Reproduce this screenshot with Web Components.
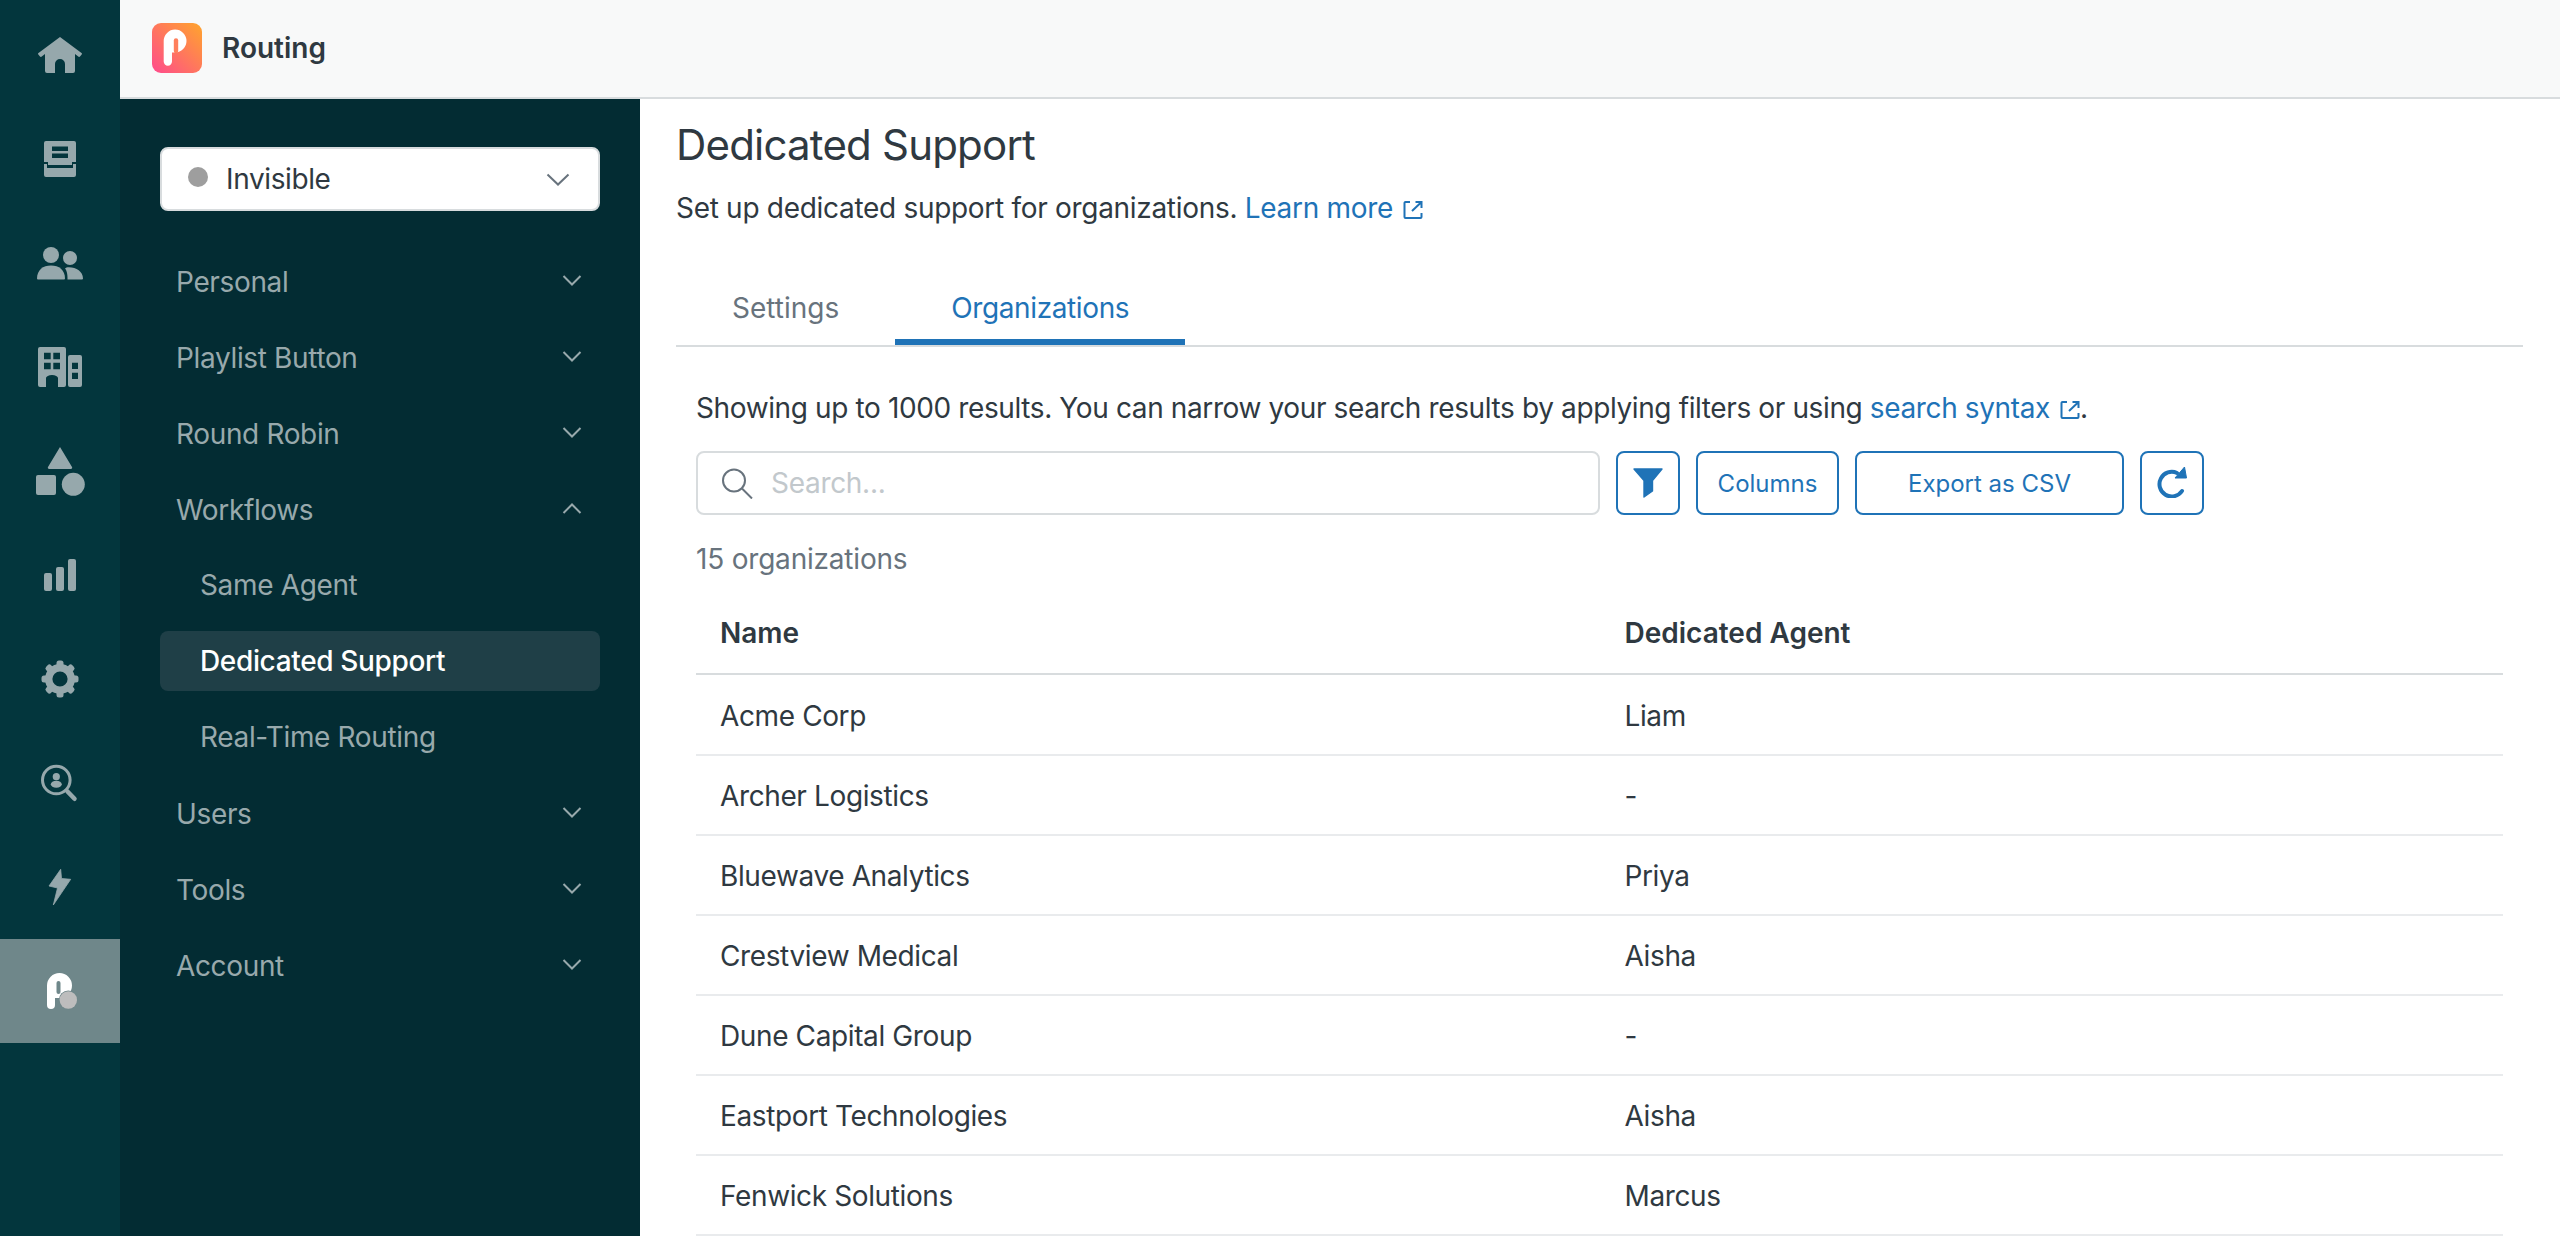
<!DOCTYPE html>
<html lang="en">
<head>
<meta charset="utf-8">
<title>Routing</title>
<style>
  html, body { margin: 0; height: 100%; overflow: hidden; background: #fff; }
  body { font-family: Inter, "Liberation Sans", sans-serif; color: #2f3941; }
</style>
</head>
<body>

<template id="app-shell">
  <style>
    :host { display: grid; grid-template-columns: 120px 1fr; grid-template-rows: 99px 1fr; height: 100vh; overflow: hidden; }
    ::slotted(rail-nav) { grid-row: 1 / 3; }
    .body { display: grid; grid-template-columns: 520px 1fr; min-height: 0; overflow: hidden; }
  </style>
  <slot name="rail"></slot>
  <slot name="bar"></slot>
  <div class="body">
    <slot name="side"></slot>
    <slot name="main"></slot>
  </div>
</template>

<template id="rail-nav">
  <style>
    :host { display: block; background: #03363d; padding-top: 3px; color: #96a8ac; }
  </style>
  <slot></slot>
</template>

<template id="rail-item">
  <style>
    :host { display: flex; align-items: center; justify-content: center; height: 104px; }
    :host([active]) { background: #6f878a; }
    ::slotted(svg) { display: block; }
  </style>
  <slot></slot>
</template>

<template id="top-bar">
  <style>
    :host { display: flex; align-items: center; gap: 20px; padding-left: 32px; padding-bottom: 2px; background: #f8f9f9; border-bottom: 2px solid #d8dcde; box-sizing: border-box; height: 99px; }
    .title { font-size: 28px; font-weight: 600; color: #2f3941; line-height: 40px; }
    svg { display: block; }
  </style>
  <svg width="50" height="50" viewBox="0 0 50 50">
    <defs>
      <linearGradient id="logo" x1="1" y1="0" x2="0" y2="1">
        <stop offset="0" stop-color="#ffa52c"/>
        <stop offset="1" stop-color="#ff4a8d"/>
      </linearGradient>
    </defs>
    <rect width="50" height="50" rx="9" fill="url(#logo)"/>
    <path d="M11.7 18a11.4 11.4 0 1 1 11.4 11.4H20V38.6a4.15 4.15 0 0 1-8.3 0Z" fill="#fff"/>
    <path d="M24 17.5V28" stroke="#ff7f5c" stroke-width="4.4" stroke-linecap="round"/>
  </svg>
  <span class="title"><slot></slot></span>
</template>

<template id="side-nav">
  <style>
    :host { display: block; background: #032c33; padding: 48px 40px 0; box-sizing: border-box; }
    .items { display: flex; flex-direction: column; gap: 16px; margin-top: 41px; }
  </style>
  <slot name="top"></slot>
  <div class="items"><slot></slot></div>
</template>

<template id="status-select">
  <style>
    :host { display: flex; align-items: center; height: 64px; box-sizing: border-box; background: #fff; border: 2px solid #d8dcde; border-radius: 8px; padding: 0 28px 0 26px; font-size: 28px; letter-spacing: -.38px; color: #2f3941; }
    .dot { width: 20px; height: 20px; border-radius: 50%; background: #9e9e9e; margin-right: 18px; margin-top: -4px; }
    .label { flex: 1; }
    svg { display: block; }
  </style>
  <span class="dot"></span>
  <span class="label"><slot></slot></span>
  <svg width="24" height="13" viewBox="0 0 24 13" fill="none" stroke="#68737d" stroke-width="2"><path d="M1.5 1.5 12 11.5 22.5 1.5"/></svg>
</template>

<template id="nav-row">
  <style>
    :host { display: flex; align-items: center; justify-content: space-between; height: 60px; padding: 0 18px 0 16px; border-radius: 8px; font-size: 28px; letter-spacing: -.35px; color: #98a9ac; }
    :host([sub]) { padding-left: 40px; }
    :host([active]) { background: #1f3f47; color: #fff; font-weight: 500; }
    :host([sub]) svg { display: none; }
    :host([open]) svg { transform: scaleY(-1); }
    svg { display: block; margin-top: -4px; }
  </style>
  <span><slot></slot></span>
  <svg width="20" height="11" viewBox="0 0 20 11" fill="none" stroke="#98a9ac" stroke-width="2"><path d="M1.5 1 10 9.5 18.5 1"/></svg>
</template>

<template id="main-view">
  <style>
    :host { display: block; background: #fff; padding: 20px 37px 0 36px; overflow: hidden; min-width: 0; }
    h1 { margin: 0; font-size: 42px; line-height: 52px; font-weight: 400; letter-spacing: -.8px; color: #2f3941; }
    .sub { margin-top: 17px; font-size: 28px; line-height: 40px; letter-spacing: -.3px; }
    .panel { padding: 0 20px; }
  </style>
  <h1><slot name="title"></slot></h1>
  <div class="sub"><slot name="sub"></slot></div>
  <slot name="tabs"></slot>
  <div class="panel"><slot></slot></div>
</template>

<template id="ext-link">
  <style>
    :host { display: inline; color: #1f73b7; }
    svg { display: inline-block; vertical-align: -2px; margin-left: 10px; }
  </style>
  <slot></slot><svg width="20" height="20" viewBox="0 0 20 20" fill="none" stroke="#1f73b7" stroke-width="2"><path d="M7 2H2.5a1 1 0 0 0-1 1V17a1 1 0 0 0 1 1H17.500a1 1 0 0 0 1-1V13"/><path d="M9 11 18 2.500M12.500 2H18.500V8"/></svg></template>

<template id="tab-bar">
  <style>
    :host { display: flex; margin-top: 36px; border-bottom: 2px solid #d8dcde; }
  </style>
  <slot></slot>
</template>

<template id="tab-item">
  <style>
    :host { display: block; padding: 24px 56px 11px; font-size: 28px; line-height: 40px; color: #68737d; border-bottom: 6px solid transparent; }
    :host([active]) { color: #1f73b7; border-bottom-color: #1f73b7; letter-spacing: -.38px; }
  </style>
  <slot></slot>
</template>

<template id="tool-bar">
  <style>
    :host { display: flex; gap: 16px; margin-top: 23px; align-items: stretch; height: 64px; width: 1510px; }
  </style>
  <slot></slot>
</template>

<template id="search-box">
  <style>
    :host { display: flex; align-items: center; flex: none; width: 904px; box-sizing: border-box; border: 2px solid #d8dcde; border-radius: 8px; padding-left: 24px; font-size: 28px; letter-spacing: -.3px; color: #c2c8cc; }
    svg { display: block; margin-right: 18px; }
  </style>
  <svg width="31" height="31" viewBox="0 0 31 31" fill="none" stroke="#68737d" stroke-width="2"><circle cx="12" cy="12.500" r="11"/><path d="M20 20.500 30 30.500"/></svg>
  <slot></slot>
</template>

<template id="tool-button">
  <style>
    :host { display: flex; align-items: center; justify-content: center; flex: none; box-sizing: border-box; height: 64px; border: 2px solid #1f73b7; border-radius: 8px; color: #1f73b7; font-size: 24px; }
    ::slotted(svg) { display: block; }
  </style>
  <slot></slot>
</template>

<template id="org-table">
  <style>
    :host { display: block; }
    .count { margin-top: 24px; font-size: 28px; line-height: 40px; letter-spacing: -.2px; color: #68737d; }
  </style>
  <div class="count"><slot name="count"></slot></div>
  <slot></slot>
</template>

<template id="org-row">
  <style>
    :host { display: grid; grid-template-columns: 904.5px 1fr; padding: 20px 0 18px; font-size: 28px; line-height: 40px; letter-spacing: -.38px; color: #2f3941; border-bottom: 2px solid #e9ebed; }
    :host([head]) { padding: 34px 0 20px; margin-bottom: 1px; font-weight: 600; letter-spacing: 0; border-bottom-color: #d8dcde; }
    div { padding-left: 24px; }
  </style>
  <div><slot name="name"></slot></div>
  <div><slot name="agent"></slot></div>
</template>

<app-shell>
  <rail-nav slot="rail">
    <rail-item>
      <svg width="44" height="36" viewBox="0 0 44 36" fill="currentColor"><path d="M22 0 43.500 16a1 1 0 0 1 .2 1.400L42 19.500a1 1 0 0 1-1.400.2L37 17V34a2 2 0 0 1-2 2H27V27a5 5 0 0 0-10 0V36H9a2 2 0 0 1-2-2V17L3.400 19.700a1 1 0 0 1-1.400-.2L.3 17.400A1 1 0 0 1 .5 16Z"/></svg>
    </rail-item>
    <rail-item>
      <svg width="32" height="36" viewBox="0 0 32 36" fill="currentColor"><path fill-rule="evenodd" d="M2 0H30a2 2 0 0 1 2 2V21H28V24H4V21H0V2A2 2 0 0 1 2 0ZM8 5.500V10H24V5.500ZM8 12.500V17H24V12.500Z"/><path d="M0 23H3V27H29V23H32V34a2 2 0 0 1-2 2H2a2 2 0 0 1-2-2Z"/></svg>
    </rail-item>
    <rail-item>
      <svg width="46" height="33" viewBox="0 0 46 33" fill="currentColor"><circle cx="14" cy="8" r="8"/><path d="M0 31.500C0 23 6 18.500 14 18.500S28 23 28 31.500a1 1 0 0 1-1 1H1a1 1 0 0 1-1-1Z"/><circle cx="33" cy="11" r="7"/><path d="M29.500 20.500C38 19.500 46 24 46 31.500a1 1 0 0 1-1 1H30.500C30.800 27 29.500 23 28 21.500Z"/></svg>
    </rail-item>
    <rail-item>
      <svg width="44" height="40" viewBox="0 0 44 40" fill="currentColor"><path fill-rule="evenodd" d="M2 0H26a2 2 0 0 1 2 2V38a2 2 0 0 1-2 2H20V31a6 3 0 0 0-12 0V40H2a2 2 0 0 1-2-2V2A2 2 0 0 1 2 0ZM6 5.700V12.300H12.700V5.700ZM15.300 5.700V12.300H22V5.700ZM6 15.700V22.300H12.700V15.700ZM15.300 15.700V22.300H22V15.700Z"/><path fill-rule="evenodd" d="M32 8H42a2 2 0 0 1 2 2V38a2 2 0 0 1-2 2H32a2 2 0 0 1-2-2V10A2 2 0 0 1 32 8ZM34 15.700V22H40V15.700ZM34 25.700V32H40V25.700Z"/></svg>
    </rail-item>
    <rail-item>
      <svg width="49" height="49" viewBox="0 0 49 49" fill="currentColor"><path d="M24 0 36 20a1.300 1.300 0 0 1-1.100 2H13.100a1.300 1.300 0 0 1-1.100-2Z"/><rect x="0" y="28" width="20" height="20" rx="2"/><circle cx="37.300" cy="37.300" r="11.500"/></svg>
    </rail-item>
    <rail-item>
      <svg width="32" height="32" viewBox="0 0 32 32" fill="currentColor"><rect y="14" width="8" height="18" rx="2"/><rect x="12" y="8" width="8" height="24" rx="2"/><rect x="24" width="8" height="32" rx="2"/></svg>
    </rail-item>
    <rail-item>
      <svg width="38" height="38" viewBox="-19 -19 38 38" fill="currentColor">
        <circle r="11.300" fill="none" stroke="currentColor" stroke-width="7.400"/>
        <rect x="-3.500" y="-18.500" width="7" height="7" rx="2.500"/>
        <rect x="-3.500" y="-18.500" width="7" height="7" rx="2.500" transform="rotate(45)"/>
        <rect x="-3.500" y="-18.500" width="7" height="7" rx="2.500" transform="rotate(90)"/>
        <rect x="-3.500" y="-18.500" width="7" height="7" rx="2.500" transform="rotate(135)"/>
        <rect x="-3.500" y="-18.500" width="7" height="7" rx="2.500" transform="rotate(180)"/>
        <rect x="-3.500" y="-18.500" width="7" height="7" rx="2.500" transform="rotate(225)"/>
        <rect x="-3.500" y="-18.500" width="7" height="7" rx="2.500" transform="rotate(270)"/>
        <rect x="-3.500" y="-18.500" width="7" height="7" rx="2.500" transform="rotate(315)"/>
      </svg>
    </rail-item>
    <rail-item>
      <svg width="40" height="38" viewBox="0 0 40 38" fill="currentColor" style="margin-left:-2px"><circle cx="17.300" cy="16" r="13.800" fill="none" stroke="currentColor" stroke-width="3"/><circle cx="17.300" cy="12.700" r="3.600"/><ellipse cx="17.300" cy="20.300" rx="5.500" ry="3.500"/><path d="M28.500 27.500 35.500 34.800" fill="none" stroke="currentColor" stroke-width="4.500" stroke-linecap="round"/></svg>
    </rail-item>
    <rail-item>
      <svg width="24" height="38" viewBox="0 0 24 38" fill="currentColor"><path d="M12.700 1.300 1 18 9.500 20 5.300 37 22.700 11.300 13.500 10.500Z" stroke="currentColor" stroke-width=".8" stroke-linejoin="round"/></svg>
    </rail-item>
    <rail-item active>
      <svg width="32" height="38" viewBox="0 0 32 38" style="margin-left:4px">
        <path d="M1 13.500a12.500 12.500 0 1 1 12.500 12.500H9V32.900a4 4 0 0 1-8 0Z" fill="#fff"/>
        <path d="M12.500 11V20" stroke="#6f878a" stroke-width="4" stroke-linecap="round"/>
        <circle cx="22.300" cy="28" r="9.500" fill="#6f878a"/>
        <circle cx="22.300" cy="28" r="8.700" fill="#bdbdbd"/>
      </svg>
    </rail-item>
  </rail-nav>

  <top-bar slot="bar">Routing</top-bar>

  <side-nav slot="side">
    <status-select slot="top">Invisible</status-select>
    <nav-row>Personal</nav-row>
    <nav-row>Playlist Button</nav-row>
    <nav-row>Round Robin</nav-row>
    <nav-row open>Workflows</nav-row>
    <nav-row sub style="margin-top:-1px">Same Agent</nav-row>
    <nav-row sub active>Dedicated Support</nav-row>
    <nav-row sub>Real-Time Routing</nav-row>
    <nav-row style="margin-top:1px">Users</nav-row>
    <nav-row>Tools</nav-row>
    <nav-row>Account</nav-row>
  </side-nav>

  <main-view slot="main">
    <span slot="title">Dedicated Support</span>
    <span slot="sub">Set up dedicated support for organizations. <ext-link>Learn more</ext-link></span>
    <tab-bar slot="tabs">
      <tab-item>Settings</tab-item>
      <tab-item active>Organizations</tab-item>
    </tab-bar>

    <div style="margin-top:41px;font-size:28px;line-height:40px;letter-spacing:-.38px">Showing up to 1000 results. You can narrow your search results by applying filters or using <ext-link>search syntax</ext-link>.</div>

    <tool-bar>
      <search-box>Search...</search-box>
      <tool-button style="width:64px">
        <svg width="30" height="30" viewBox="0 0 30 30" fill="#1f73b7" stroke="#1f73b7" stroke-width="1.400" stroke-linejoin="round"><path d="M1 1H29L19.500 12.500V23L11 29V12.500Z"/></svg>
      </tool-button>
      <tool-button style="width:143px">Columns</tool-button>
      <tool-button style="width:269px">Export as CSV</tool-button>
      <tool-button style="width:64px">
        <svg width="32" height="32" viewBox="0 0 32 32" fill="none" stroke="#1f73b7" stroke-width="4" style="margin-top:-2px"><path d="M21 7A12.300 12.300 0 1 0 26 25" stroke-linecap="round"/><path d="M28.500 1 30.500 12 19 12Z" fill="#1f73b7" stroke-width="1" stroke-linejoin="round"/></svg>
      </tool-button>
    </tool-bar>

    <org-table>
      <span slot="count">15 organizations</span>
      <org-row head><span slot="name">Name</span><span slot="agent">Dedicated Agent</span></org-row>
      <org-row><span slot="name">Acme Corp</span><span slot="agent">Liam</span></org-row>
      <org-row><span slot="name">Archer Logistics</span><span slot="agent">-</span></org-row>
      <org-row><span slot="name">Bluewave Analytics</span><span slot="agent">Priya</span></org-row>
      <org-row><span slot="name">Crestview Medical</span><span slot="agent">Aisha</span></org-row>
      <org-row><span slot="name">Dune Capital Group</span><span slot="agent">-</span></org-row>
      <org-row><span slot="name">Eastport Technologies</span><span slot="agent">Aisha</span></org-row>
      <org-row><span slot="name">Fenwick Solutions</span><span slot="agent">Marcus</span></org-row>
    </org-table>
  </main-view>
</app-shell>

<script>
class ShadowPart extends HTMLElement {
  constructor() {
    super();
    var tpl = document.getElementById(this.localName).content;
    this.attachShadow({mode: 'open'}).appendChild(tpl.cloneNode(true));
  }
}
['app-shell', 'rail-nav', 'rail-item', 'top-bar', 'side-nav', 'status-select', 'nav-row',
 'main-view', 'ext-link', 'tab-bar', 'tab-item', 'tool-bar', 'search-box', 'tool-button',
 'org-table', 'org-row'].forEach(function (name) {
  customElements.define(name, class extends ShadowPart {});
});
</script>
</body>
</html>
